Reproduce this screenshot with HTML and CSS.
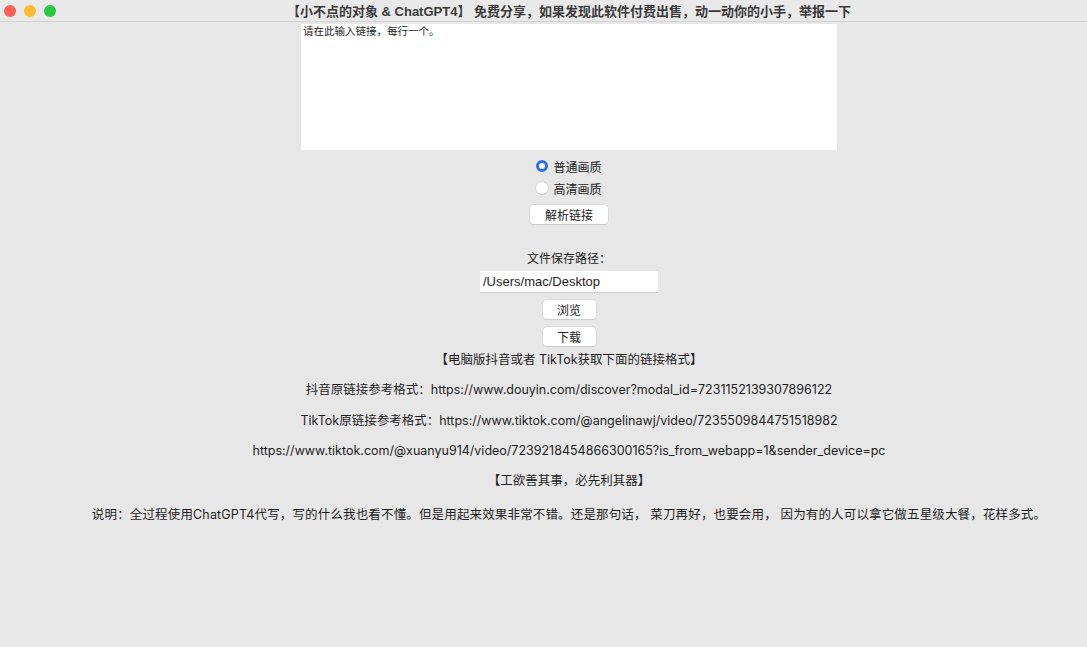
FILE: index.html
```html
<!DOCTYPE html>
<html lang="zh">
<head>
  <meta charset="UTF-8" />
  <title>小不点的对象 &amp; ChatGPT4</title>
  <link rel="stylesheet" href="styles.css">
</head>
<body>
  <div class="window">
    <div class="titlebar">
      <div class="lights">
        <span class="light red"></span>
        <span class="light yellow"></span>
        <span class="light green"></span>
      </div>
      <div class="title">【小不点的对象 &amp; ChatGPT4】 免费分享，如果发现此软件付费出售，动一动你的小手，举报一下</div>
      <div></div>
    </div>

    <div class="main">
      <div class="links-box">请在此输入链接，每行一个。</div>

      <label class="radio first"><span class="dot on"></span>普通画质</label>
      <label class="radio"><span class="dot"></span>高清画质</label>
      <button class="btn btn-parse">解析链接</button>

      <div class="label-path">文件保存路径：</div>
      <div class="entry">/Users/mac/Desktop</div>
      <button class="btn btn-small btn-browse">浏览</button>
      <button class="btn btn-small btn-down">下载</button>

      <p class="line l1">【电脑版抖音或者 TikTok获取下面的链接格式】</p>
      <p class="line l2">抖音原链接参考格式：https://www.douyin.com/discover?modal_id=7231152139307896122</p>
      <p class="line l3">TikTok原链接参考格式：https://www.tiktok.com/@angelinawj/video/7235509844751518982</p>
      <p class="line l4">https://www.tiktok.com/@xuanyu914/video/7239218454866300165?is_from_webapp=1&amp;sender_device=pc</p>
      <p class="line l5">【工欲善其事，必先利其器】</p>
      <p class="line l6">说明：全过程使用ChatGPT4代写，写的什么我也看不懂。但是用起来效果非常不错。还是那句话， 菜刀再好，也要会用， 因为有的人可以拿它做五星级大餐，花样多式。</p>
    </div>
  </div>
</body>
</html>
```

FILE: styles.css
```css
body {
  margin: 0;
  height: 647px;
  background: #e7e7e7;
  color: #1e1e1e;
  font-family: "Inter", "Noto Sans CJK SC", sans-serif;
  font-size: 12px;
  overflow: hidden;
}

/* the window is wider than the shot, its right edge is cut off */
.window {
  width: 1138px;
}

.titlebar {
  height: 21px;
  display: grid;
  grid-template-columns: 1fr auto 1fr;
  align-items: center;
  background: #e9e9e9;
  border-bottom: 1px solid #d2d2d2;
}
.lights {
  display: flex;
  gap: 8px;
  padding-left: 4px;
}
.light {
  width: 12px;
  height: 12px;
  border-radius: 50%;
}
.red { background: #fe5f57; }
.yellow { background: #febc2e; }
.green { background: #28c840; }
.title {
  font-family: "Liberation Sans", "Noto Sans CJK SC", sans-serif;
  font-weight: bold;
  font-size: 13px;
  color: #3a3a3a;
}

.main {
  display: flex;
  flex-direction: column;
  align-items: center;
}

.links-box {
  width: 536px;
  height: 126px;
  margin-top: 2px;
  padding: 1px 0 0 2px;
  box-sizing: border-box;
  background: #fff;
  font-size: 10.5px;
  line-height: 14px;
}

.radio {
  display: flex;
  align-items: center;
  height: 22px;
  gap: 5px;
}
.radio.first { margin-top: 5px; }
.dot {
  width: 12px;
  height: 12px;
  border-radius: 50%;
  background: #fff;
  box-shadow: 0 0 0 0.5px #c8c8c8, 0 1px 1px rgba(0,0,0,0.1);
  box-sizing: border-box;
}
.dot.on {
  background: #fff;
  border: 3.5px solid #2d6ee6;
  box-shadow: none;
}

.btn {
  font-family: inherit;
  font-size: 12px;
  height: 19px;
  padding: 0;
  border: none;
  border-radius: 4px;
  background: #fff;
  color: #222;
  box-shadow: 0 0 0 0.5px #cfcfcf, 0 1px 1px rgba(0,0,0,0.15);
}
.btn-parse {
  width: 78px;
  margin-top: 6px;
}
.btn-small { width: 53px; }
.btn-browse { margin-top: 7px; }
.btn-down { margin-top: 8px; }

.label-path {
  margin-top: 26px;
  height: 18px;
  line-height: 18px;
}
.entry {
  width: 178px;
  height: 22px;
  margin-top: 3px;
  padding-left: 3px;
  box-sizing: border-box;
  background: #fff;
  border-bottom: 1px solid #cfcfcf;
  line-height: 22px;
  font-family: "Liberation Sans", sans-serif;
  font-size: 13px;
}

.line {
  margin: 0;
  height: 18px;
  line-height: 18px;
  font-size: 12.5px;
  white-space: nowrap;
}
.l1 { margin-top: 5px; }
.l2 { margin-top: 12px; }
.l3 { margin-top: 13px; }
.l4 { margin-top: 12px; }
.l5 { margin-top: 12px; }
.l6 { margin-top: 16px; letter-spacing: 0.15px; }
```
